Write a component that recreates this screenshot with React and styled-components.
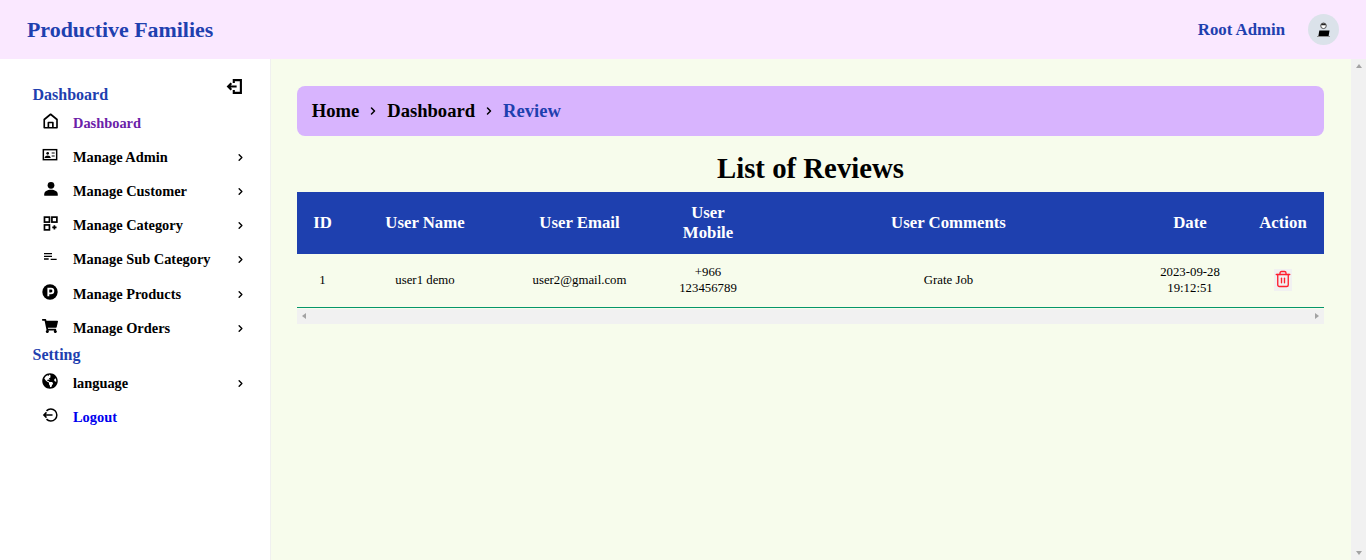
import React from 'react';
import styled, { createGlobalStyle } from 'styled-components';
import { FaGlobeAmericas, FaShoppingCart } from 'react-icons/fa';
import { Trash2, ChevronRight } from 'lucide-react';

const GlobalStyle = createGlobalStyle`
    html, body {
        margin: 0;
        height: 100%;
        overflow: hidden;
    }
    body {
        font-family: "Liberation Serif", "Times New Roman", serif;
        color: #000;
    }
    * { box-sizing: border-box; }
`

const Icon = ({ size = 18, children }) => (
    <svg width={size} height={size} viewBox="0 0 24 24" fill="none" stroke="currentColor" strokeWidth="2">{children}</svg>
)

const menu = [
    { label: 'Dashboard', active: true, icon: <Icon size={18}><path d="M3 21V10L11.500 3 20 10v11zM8.500 21v-7h6v7" strokeLinejoin="round" strokeWidth="2.200" /></Icon> },
    { label: 'Manage Admin', arrow: true, icon: <Icon size={16}><rect x="2" y="4" width="20" height="15" strokeWidth="2.200" /><circle cx="8.500" cy="9.500" r="2" fill="currentColor" stroke="none" /><path d="M5 15.500c.5-2.500 6.500-2.500 7 0zM14.500 9H19M14.500 13.500H19" strokeWidth="1.800" /></Icon> },
    { label: 'Manage Customer', arrow: true, icon: <Icon size={18}><circle cx="12" cy="7" r="4.500" fill="currentColor" stroke="none" /><path d="M3 21v-2c0-4 4-6 9-6s9 2 9 6v2z" fill="currentColor" stroke="none" /></Icon> },
    { label: 'Manage Category', arrow: true, icon: <Icon size={17}><rect x="3.500" y="3" width="7" height="7" strokeWidth="2.400" /><rect x="14" y="3" width="7" height="7" strokeWidth="2.400" /><rect x="3.500" y="14" width="7" height="7" strokeWidth="2.400" /><path d="M17.500 14.500v6M14.500 17.500h6" strokeWidth="2.400" /></Icon> },
    { label: 'Manage Sub Category', arrow: true, icon: <Icon size={16}><path d="M3 7h12M3 11h12M3 15h7M13 15.500h9" strokeWidth="2" /></Icon> },
    { label: 'Manage Products', arrow: true, icon: <Icon size={16}><circle cx="12" cy="12" r="11.500" fill="currentColor" stroke="none" /><path d="M9.500 18.500V7h4a3.500 3.500 0 0 1 0 7h-4" stroke="#fff" strokeWidth="2.800" /></Icon> },
    { label: 'Manage Orders', arrow: true, icon: <FaShoppingCart size={16} /> },
]

const columns = [51, 154, 155, 102, 379, 104, 82]

const App = () => {
    return (
        <Page>
            <GlobalStyle />
            <Header>
                <Brand>Productive Families</Brand>
                <UserBox>
                    <UserName>Root Admin</UserName>
                    <Avatar>
                        <svg width="13" height="15" viewBox="0 0 14 16">
                            <circle cx="7" cy="4" r="3" fill="#fff" stroke="#444" strokeWidth="1" />
                            <path d="M4 3.500c1-2.500 5-2.500 6 0z" fill="#222" />
                            <path d="M1.500 15l1-6h11l-1 6z" fill="#000" />
                            <path d="M0 15h14v1H0z" fill="#888" />
                        </svg>
                    </Avatar>
                </UserBox>
            </Header>
            <Body>
                <Sidebar>
                    <ToggleButton>
                        <svg width="17" height="17" viewBox="0 0 24 24" fill="none" stroke="currentColor" strokeWidth="3">
                            <path d="M11 7V3h10v18H11v-4M3 12h12M7.500 7.500L3 12l4.500 4.500" />
                        </svg>
                    </ToggleButton>
                    <SectionTitle>Dashboard</SectionTitle>
                    {menu.map((item) => (
                        <MenuRow key={item.label}>
                            <MenuIcon>{item.icon}</MenuIcon>
                            <MenuLabel $active={item.active}>{item.label}</MenuLabel>
                            {item.arrow && <ChevronRight size={11} strokeWidth={3} />}
                        </MenuRow>
                    ))}
                    <SectionTitle>Setting</SectionTitle>
                    <MenuRow>
                        <MenuIcon><FaGlobeAmericas size={16} /></MenuIcon>
                        <MenuLabel>language</MenuLabel>
                        <ChevronRight size={11} strokeWidth={3} />
                    </MenuRow>
                    <MenuRow>
                        <MenuIcon>
                            <Icon size={18}>
                                <path d="M6 6.500a8 8 0 1 1 0 11M2 12h12M6 8.500L2.500 12 6 15.500" />
                            </Icon>
                        </MenuIcon>
                        <LogoutLabel>Logout</LogoutLabel>
                    </MenuRow>
                </Sidebar>
                <Main>
                    <Content>
                        <Breadcrumb>
                            <span>Home</span>
                            <ChevronRight size={12} strokeWidth={3} />
                            <span>Dashboard</span>
                            <ChevronRight size={12} strokeWidth={3} />
                            <Current>Review</Current>
                        </Breadcrumb>
                        <PageTitle>List of Reviews</PageTitle>
                        <Table>
                            <colgroup>
                                {columns.map((w, i) => <col key={i} width={w} />)}
                            </colgroup>
                            <thead>
                                <tr>
                                    <Th>ID</Th>
                                    <Th>User Name</Th>
                                    <Th>User Email</Th>
                                    <Th>User<br />Mobile</Th>
                                    <Th>User Comments</Th>
                                    <Th>Date</Th>
                                    <Th>Action</Th>
                                </tr>
                            </thead>
                            <tbody>
                                <tr>
                                    <Td>1</Td>
                                    <Td>user1 demo</Td>
                                    <Td>user2@gmail.com</Td>
                                    <Td>+966<br />123456789</Td>
                                    <Td>Grate Job</Td>
                                    <Td>2023-09-28<br />19:12:51</Td>
                                    <Td>
                                        <DeleteButton><Trash2 size={20} strokeWidth={1.800} /></DeleteButton>
                                    </Td>
                                </tr>
                            </tbody>
                        </Table>
                        <HScrollbar>
                            <ArrowLeft />
                            <ArrowRight />
                        </HScrollbar>
                    </Content>
                    <VScrollbar>
                        <ArrowUp />
                        <ArrowDown />
                    </VScrollbar>
                </Main>
            </Body>
        </Page>
    )
}

const Page = styled.div`
    height: 560px;
    display: flex;
    flex-direction: column;
`
const Header = styled.header`
    height: 59px;
    flex: none;
    background-color: #fae8ff;
    display: flex;
    justify-content: space-between;
    align-items: center;
    padding: 0 27px;
`
const Brand = styled.div`
    color: #1e40af;
    font-size: 21.900px;
    font-weight: 700;
`
const UserBox = styled.div`
    display: flex;
    align-items: center;
    gap: 23px;
`
const UserName = styled.div`
    color: #1e40af;
    font-size: 16.800px;
    font-weight: 700;
`
const Avatar = styled.div`
    width: 31px;
    height: 31px;
    border-radius: 50%;
    background-color: #dbe2ea;
    display: flex;
    align-items: center;
    justify-content: center;
`
const Body = styled.div`
    flex: 1;
    display: flex;
    min-height: 0;
`
const Sidebar = styled.aside`
    position: relative;
    width: 271px;
    flex: none;
    background-color: #fff;
    border-right: 1px solid #f0f0f0;
    padding: 25px 24.500px 0 32.500px;
`
const ToggleButton = styled.div`
    position: absolute;
    top: 19px;
    left: 226px;
    display: flex;
`
const SectionTitle = styled.div`
    color: #1e40af;
    font-size: 16px;
    font-weight: 700;
    line-height: 21px;
`
const MenuRow = styled.div`
    height: 34.200px;
    display: flex;
    align-items: center;
    padding: 2px 0 0 9.500px;
`
const MenuIcon = styled.div`
    width: 31px;
    height: 20px;
    display: flex;
    align-items: center;
    margin-top: -5px;
`
const MenuLabel = styled.div`
    flex: 1;
    font-size: 14.400px;
    font-weight: 700;
    color: ${(p) => (p.$active ? '#6b21a8' : '#000')};
`
const LogoutLabel = styled(MenuLabel)`
    color: #0000ee;
`
const Main = styled.main`
    flex: 1;
    min-width: 0;
    background-color: #f7fcec;
    display: flex;
`
const Content = styled.div`
    flex: 1;
    min-width: 0;
    padding: 27px 27px 0 26px;
`
const Breadcrumb = styled.div`
    height: 50px;
    border-radius: 8px;
    background-color: #d8b4fe;
    display: flex;
    align-items: center;
    gap: 8px;
    padding: 0 14.700px;
    font-size: 18.600px;
    font-weight: 700;
`
const Current = styled.span`
    color: #1e40af;
`
const PageTitle = styled.h1`
    margin: 0;
    height: 56px;
    padding-top: 8px;
    text-align: center;
    font-size: 28.800px;
    line-height: 48px;
    font-weight: 700;
`
const Table = styled.table`
    width: 100%;
    table-layout: fixed;
    border-collapse: collapse;
    border-bottom: 1px solid #059669;
`
const Th = styled.th`
    height: 62px;
    padding: 0;
    background-color: #1e40af;
    color: #fff;
    font-size: 16.800px;
    line-height: 20px;
    font-weight: 700;
    text-align: center;
`
const Td = styled.td`
    height: 53px;
    padding: 0;
    font-size: 12.800px;
    line-height: 16px;
    text-align: center;
`
const DeleteButton = styled.span`
    display: inline-flex;
    align-items: flex-start;
    justify-content: center;
    width: 18px;
    height: 22px;
    background-color: #f1f1f1;
    color: #ff1f2f;
    vertical-align: middle;
`
const HScrollbar = styled.div`
    height: 15px;
    margin-top: 1px;
    background-color: #f1f1f1;
    display: flex;
    align-items: center;
    justify-content: space-between;
    padding: 0 5px;
`
const VScrollbar = styled.div`
    width: 15px;
    flex: none;
    background-color: #f1f1f1;
    display: flex;
    flex-direction: column;
    align-items: center;
    justify-content: space-between;
    padding: 5px 0;
`
const ArrowLeft = styled.i`
    border-style: solid;
    border-width: 3.500px 4px 3.500px 0;
    border-color: transparent #a3a3a3 transparent transparent;
`
const ArrowRight = styled.i`
    border-style: solid;
    border-width: 3.500px 0 3.500px 4px;
    border-color: transparent transparent transparent #a3a3a3;
`
const ArrowUp = styled.i`
    border-style: solid;
    border-width: 0 3.500px 4px;
    border-color: transparent transparent #a3a3a3;
`
const ArrowDown = styled.i`
    border-style: solid;
    border-width: 4px 3.500px 0;
    border-color: #a3a3a3 transparent transparent;
`

export default App
